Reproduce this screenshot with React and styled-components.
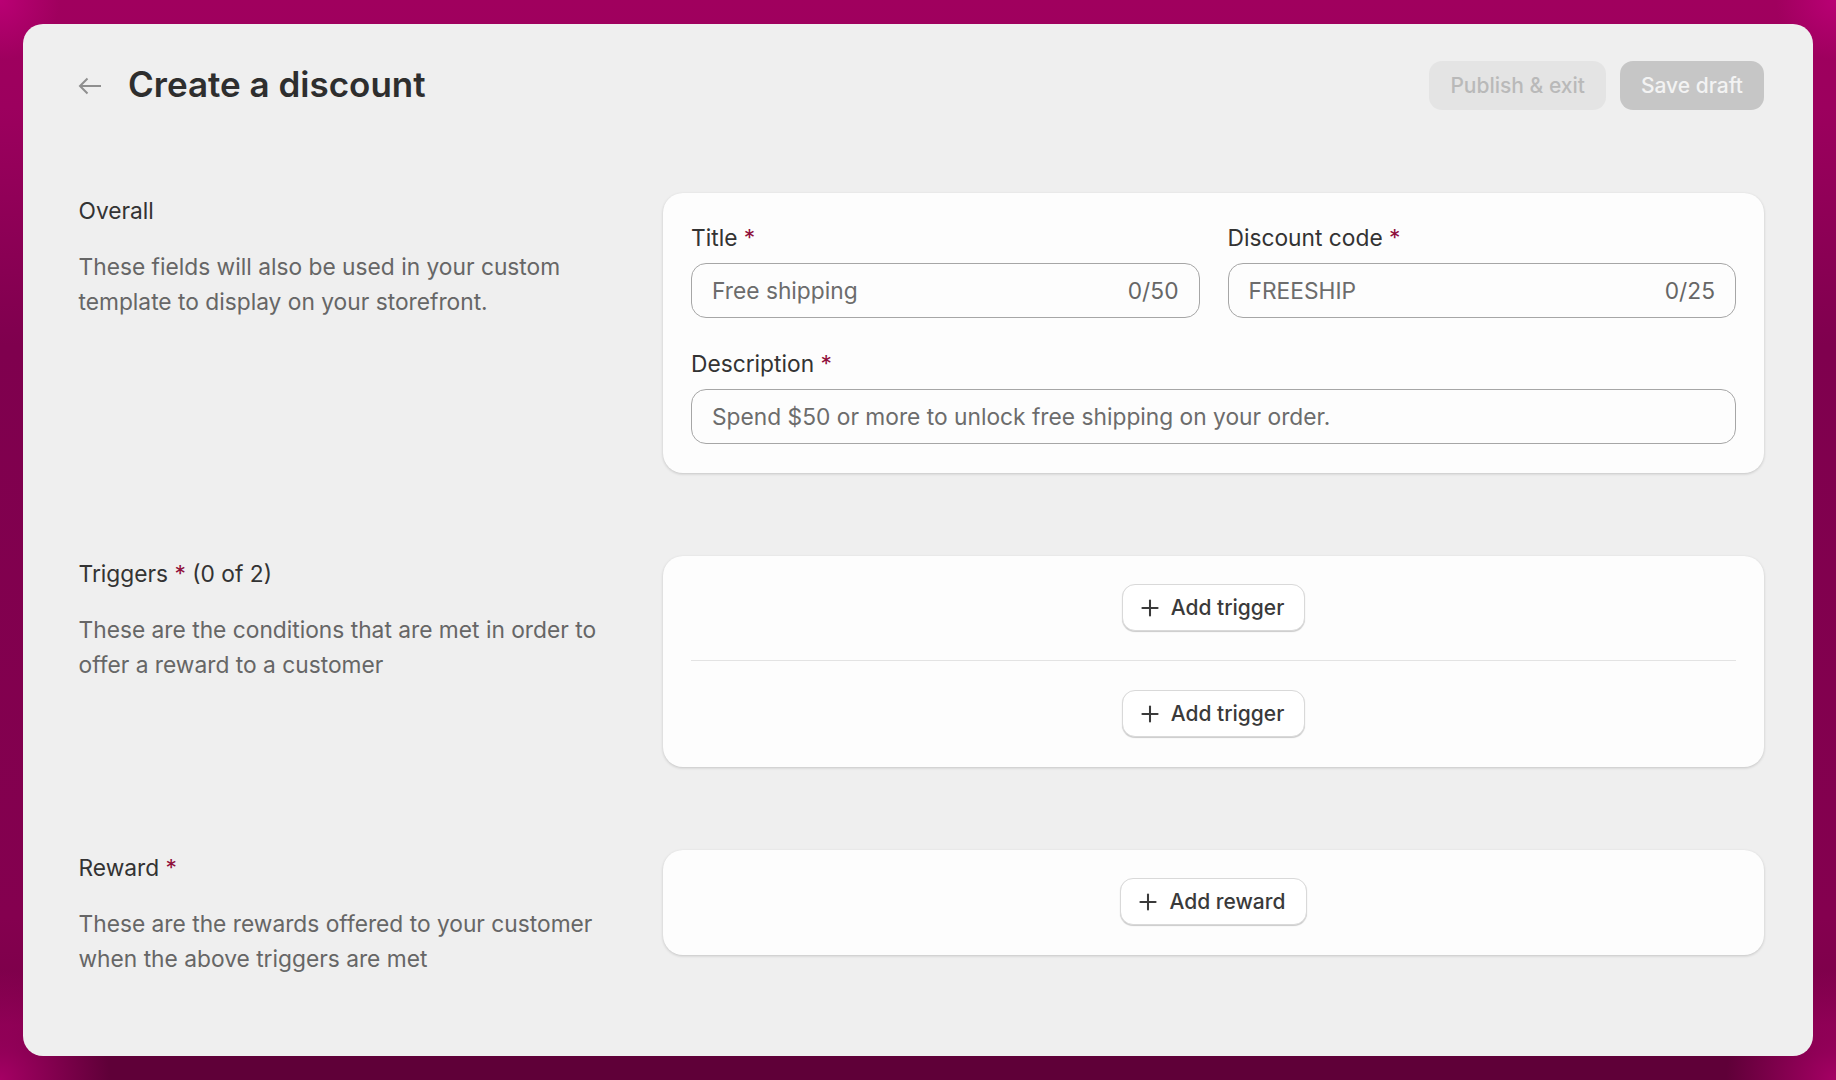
import styled, { createGlobalStyle } from 'styled-components'
import { Plus } from 'lucide-react'

const GlobalStyle = createGlobalStyle`
  html, body {
    margin: 0;
    padding: 0;
  }
  body {
    font-family: Inter, "Noto Sans", "Liberation Sans", sans-serif;
    background: #7d004f;
  }
  * {
    box-sizing: border-box;
  }
`

function App() {
  return (
    <Page>
      <GlobalStyle />
      <Frame>
        <Header>
          <HeaderLeft>
            <BackButton aria-label="Back">
              <svg width="24" height="18" viewBox="0 0 24 18" fill="none" stroke="currentColor" strokeWidth="2">
                <path d="M23 9H2M9.5 1.5L2 9l7.5 7.5" />
              </svg>
            </BackButton>
            <PageTitle>Create a discount</PageTitle>
          </HeaderLeft>
          <HeaderActions>
            <PublishButton disabled>Publish &amp; exit</PublishButton>
            <SaveButton disabled>Save draft</SaveButton>
          </HeaderActions>
        </Header>

        <Section>
          <Intro>
            <SectionName>Overall</SectionName>
            <SectionText>
              These fields will also be used in your custom template to display on your storefront.
            </SectionText>
          </Intro>
          <FormCard>
            <FieldRow>
              <Field>
                <Label>Title <Required>*</Required></Label>
                <InputBox>
                  <Input placeholder="Free shipping" />
                  <Counter>0/50</Counter>
                </InputBox>
              </Field>
              <Field>
                <Label>Discount code <Required>*</Required></Label>
                <InputBox>
                  <Input placeholder="FREESHIP" />
                  <Counter>0/25</Counter>
                </InputBox>
              </Field>
            </FieldRow>
            <Field>
              <Label>Description <Required>*</Required></Label>
              <InputBox>
                <Input placeholder="Spend $50 or more to unlock free shipping on your order." />
              </InputBox>
            </Field>
          </FormCard>
        </Section>

        <Section>
          <Intro>
            <SectionName>Triggers <Required>*</Required> (0 of 2)</SectionName>
            <SectionText>
              These are the conditions that are met in order to offer a reward to a customer
            </SectionText>
          </Intro>
          <ActionCard>
            <AddButton>
              <Plus size={26} strokeWidth={1.9} />
              Add trigger
            </AddButton>
            <Divider />
            <AddButton>
              <Plus size={26} strokeWidth={1.9} />
              Add trigger
            </AddButton>
          </ActionCard>
        </Section>

        <Section>
          <Intro>
            <SectionName>Reward <Required>*</Required></SectionName>
            <SectionText>
              These are the rewards offered to your customer when the above triggers are met
            </SectionText>
          </Intro>
          <ActionCard>
            <AddButton>
              <Plus size={26} strokeWidth={1.9} />
              Add reward
            </AddButton>
          </ActionCard>
        </Section>
      </Frame>
    </Page>
  )
}

export default App

/* ===== styles ===== */

const Page = styled.div`
  width: 1836px;
  height: 1080px;
  padding: 24px 23px;
  overflow: hidden;
  background:
    radial-gradient(circle at 0 0, rgba(190, 0, 120, 0.85) 0, rgba(190, 0, 120, 0) 60px),
    radial-gradient(circle at 100% 0, rgba(190, 0, 120, 0.85) 0, rgba(190, 0, 120, 0) 60px),
    radial-gradient(circle at 0 100%, rgba(165, 0, 100, 1) 0, rgba(165, 0, 100, 0) 110px),
    radial-gradient(circle at 100% 100%, rgba(165, 0, 100, 1) 0, rgba(165, 0, 100, 0) 110px),
    linear-gradient(180deg, #a0005e 0%, #9c005e 10%, #7f004e 32%, #84004f 85%, #7a0048 95%, #5f0038 97.6%, #5f0038 100%);
`

const Frame = styled.div`
  width: 1790px;
  height: 1032px;
  padding: 37px 49px 0 55px;
  background: #efefef;
  border-radius: 20px;
`

const Header = styled.div`
  display: flex;
  align-items: center;
  justify-content: space-between;
  height: 49px;
  margin-bottom: 83px;
`

const HeaderLeft = styled.div`
  display: flex;
  align-items: center;
  gap: 26px;
`

const BackButton = styled.button`
  display: flex;
  padding: 0;
  border: none;
  background: none;
  color: #8f8f8f;
`

const PageTitle = styled.h1`
  margin: 0 0 3px;
  font-size: 35px;
  line-height: 40px;
  font-weight: 600;
  color: #2e2e2e;
`

const HeaderActions = styled.div`
  display: flex;
  gap: 14px;
`

const HeaderButton = styled.button`
  height: 49px;
  padding: 0 21px;
  border: none;
  border-radius: 13px;
  font-family: inherit;
  font-size: 21px;
  font-weight: 500;
`

const PublishButton = styled(HeaderButton)`
  background: #e4e4e4;
  color: #b9b9b9;
`

const SaveButton = styled(HeaderButton)`
  background: #c6c6c6;
  color: #f3f3f3;
`

const Section = styled.section`
  display: grid;
  grid-template-columns: 585px 1101px;
  align-items: start;
  margin-bottom: 83px;
`

const Intro = styled.div`
  padding: 4px 0 0 0.5px;
`

const SectionName = styled.div`
  font-size: 22.75px;
  line-height: 28px;
  color: #333;
`

const SectionText = styled.p`
  width: 530px;
  margin: 23.5px 0 0;
  font-size: 22.75px;
  line-height: 35px;
  color: #666;
`

const Required = styled.span`
  color: #8f0f3c;
`

const Card = styled.div`
  background: #fdfdfd;
  border-radius: 20px;
  box-shadow: 0 1px 3px rgba(0, 0, 0, 0.18);
`

const FormCard = styled(Card)`
  display: flex;
  flex-direction: column;
  gap: 33px;
  padding: 32px 28px 29px;
`

const FieldRow = styled.div`
  display: grid;
  grid-template-columns: 1fr 1fr;
  gap: 28px;
`

const Field = styled.div`
  display: flex;
  flex-direction: column;
  gap: 12px;
`

const Label = styled.label`
  font-size: 22.75px;
  line-height: 26px;
  color: #333;
`

const InputBox = styled.div`
  display: flex;
  align-items: center;
  height: 55px;
  padding: 0 20px;
  background: #fdfdfd;
  border: 1.5px solid #a6a6a6;
  border-radius: 15px;
`

const Input = styled.input`
  flex: 1;
  min-width: 0;
  padding: 0;
  border: none;
  outline: none;
  background: transparent;
  font-family: inherit;
  font-size: 22.75px;
  color: #333;

  &::placeholder {
    color: #6c6c6c;
    opacity: 1;
  }
`

const Counter = styled.span`
  font-size: 22.75px;
  color: #666;
`

const ActionCard = styled(Card)`
  display: flex;
  flex-direction: column;
  align-items: center;
  gap: 29px;
  padding: 28px 28px 30px;
`

const AddButton = styled.button`
  display: flex;
  align-items: center;
  gap: 8px;
  height: 47px;
  padding: 0 20px 0 14px;
  background: #fff;
  border: 1px solid #d9d9d9;
  border-radius: 13px;
  box-shadow: 0 1px 1px rgba(0, 0, 0, 0.2);
  font-family: inherit;
  font-size: 21px;
  font-weight: 500;
  color: #3a3a3a;
`

const Divider = styled.hr`
  align-self: stretch;
  height: 1px;
  margin: 0;
  border: none;
  background: #e3e3e3;
`
